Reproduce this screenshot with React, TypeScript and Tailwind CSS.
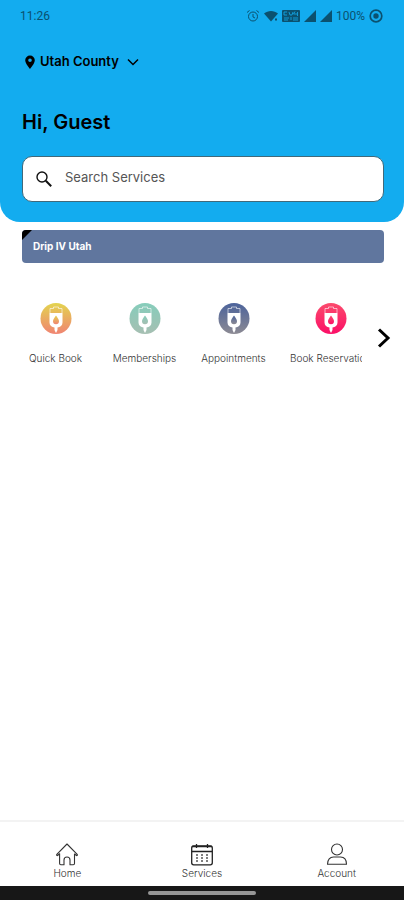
import { useState } from 'react'

type Service = {
  id: string
  label: string
  from: string
  to: string
}

const SERVICES: Service[] = [
  { id: 'quick', label: 'Quick Book', from: '#e3d44f', to: '#f08472' },
  { id: 'memberships', label: 'Memberships', from: '#86cdbb', to: '#a6bfb2' },
  { id: 'appointments', label: 'Appointments', from: '#4c639b', to: '#8c8a93' },
  { id: 'reservation', label: 'Book Reservation', from: '#fb4a6c', to: '#fb0f67' },
]

function DripIcon({ id, from, to }: Service) {
  return (
    <svg viewBox="0 0 32 32" className="h-8 w-8" aria-hidden="true">
      <defs>
        <linearGradient id={id} x1="0" y1="0" x2="0" y2="1">
          <stop offset="0" stopColor={from} />
          <stop offset="1" stopColor={to} />
        </linearGradient>
      </defs>
      <circle cx="16" cy="16.500" r="15.500" fill={`url(#${id})`} />
      <path d="M10 11V6.500h3.500V5h5v1.500H22V11" fill="none" stroke="#fff" strokeOpacity="0.6" strokeWidth="1" />
      <path d="M9.500 11h13v9.500a5 5 0 0 1-5 5v2.500L16 31l-1.500-3v-2.500a5 5 0 0 1-5-5z" fill="#fff" />
      <path d="M16 13.500c1.800 2.600 3 4.200 3 5.700a3 3 0 0 1-6 0c0-1.500 1.200-3.100 3-5.700z" fill={`url(#${id})`} />
    </svg>
  )
}

function StatusIcons() {
  return (
    <div className="flex items-center">
      {/* Alarm */}
      <svg viewBox="0 0 14 14" className="mr-1 h-3.5 w-3.5" fill="none" stroke="currentColor" aria-hidden="true">
        <circle cx="7" cy="7.500" r="4.500" />
        <path d="M7 5v3l2 1M1 3.500 3.500 1.500M13 3.500 10.500 1.500" />
      </svg>
      {/* Wifi */}
      <svg viewBox="0 0 14 14" className="mr-1 h-3.5 w-3.5" fill="currentColor" aria-hidden="true">
        <path d="M0 4.500C4 1 10 1 14 4.500L7 12.500z" />
        <path d="M11 9.500h2v2h-2z" />
      </svg>
      {/* VoLTE */}
      <svg viewBox="0 0 18 12" className="mr-1 h-3 w-[18px]" aria-hidden="true">
        <rect width="18" height="12" rx="1" fill="currentColor" />
        <path d="M2 2v3h3M5 2H2M7 2l1 3h2l1-3M13 1.500 11.500 4H15M15.500 2v4M2 8h5M9 7v3M11 8h5M2 10h4M11 10h5" fill="none" stroke="#13acef" strokeWidth="0.800" />
      </svg>
      <svg viewBox="0 0 12 12" className="mr-1 h-3 w-3" fill="currentColor" aria-hidden="true">
        <path d="M12 0v12H0z" />
      </svg>
      <svg viewBox="0 0 12 12" className="mr-1 h-3 w-3" fill="currentColor" aria-hidden="true">
        <path d="M12 0v12H0z" />
      </svg>
      <span className="mr-1 font-[Roboto]">100%</span>
      <svg viewBox="0 0 14 14" className="h-3.5 w-3.5" aria-hidden="true">
        <circle cx="7" cy="7" r="5.800" fill="none" stroke="currentColor" strokeWidth="1.700" />
        <circle cx="7" cy="7" r="2.700" fill="currentColor" />
      </svg>
    </div>
  )
}

function HomeIcon() {
  return (
    <svg viewBox="0 0 24 24" className="h-6 w-6" fill="none" stroke="#333" strokeWidth="1.100" strokeLinejoin="round" aria-hidden="true">
      <path d="M5 11.500 2.800 13.300a.7.7 0 0 1-1-1L12 2l10.200 10.300a.7.7 0 0 1-1 1L19.500 12v9.500a1.200 1.200 0 0 1-1.200 1.200H15V18a3 3 0 0 0-6 0v4.700H5.800a1.200 1.200 0 0 1-1.200-1.200V12" />
    </svg>
  )
}

function CalendarIcon() {
  return (
    <svg viewBox="0 0 24 24" className="h-6 w-6" fill="none" stroke="#222" strokeWidth="1.300" aria-hidden="true">
      <rect x="1.700" y="4" width="20.600" height="18.800" rx="2" />
      <path d="M2 9.500h20M6.500 2v4M17.500 2v4M2 4.500h20" />
      <path d="M6 13h2M11 13h2M16 13h2M6 16h2M11 16h2M16 16h2M6 19h2M11 19h2M16 19h2" stroke="#555" />
    </svg>
  )
}

function AccountIcon() {
  return (
    <svg viewBox="0 0 24 24" className="h-6 w-6" fill="none" stroke="#333" strokeWidth="1.100" strokeLinejoin="round" aria-hidden="true">
      <circle cx="12" cy="7.500" r="5.500" />
      <path d="M2.500 22.300c0-5 2.500-7.300 6-7.300h7c3.500 0 6 2.300 6 7.300z" />
    </svg>
  )
}

const TABS = [
  { label: 'Home', icon: HomeIcon },
  { label: 'Services', icon: CalendarIcon },
  { label: 'Account', icon: AccountIcon },
]

export default function App() {
  const [query, setQuery] = useState('')

  return (
    <div className="flex min-h-screen flex-col bg-white font-[Inter,sans-serif] text-black">
      <header className="rounded-b-[20px] bg-[#13acef] pb-5">
        <div className="flex h-8 items-center justify-between pr-[21px] pl-5 text-xs text-[#0b516f]">
          <span className="font-[Roboto]">11:26</span>
          <StatusIcons />
        </div>

        <div className="pr-5 pl-[22px]">
          <button type="button" className="mt-5 flex h-5 items-center text-[13px] font-semibold">
            <svg viewBox="0 0 16 16" className="mr-0.5 h-4 w-4" aria-hidden="true">
              <path fillRule="evenodd" d="M8 1.500a4.800 4.800 0 0 0-4.800 4.800C3.200 9.500 8 15 8 15s4.800-5.500 4.800-8.700A4.800 4.800 0 0 0 8 1.500zm0 3a1.800 1.800 0 1 1 0 3.600 1.800 1.800 0 0 1 0-3.600z" />
            </svg>
            Utah County
            <svg viewBox="0 0 12 12" className="ml-2 h-3 w-3" fill="none" stroke="currentColor" strokeWidth="1.500" aria-hidden="true">
              <path d="M1 3.500l5 5 5-5" />
            </svg>
          </button>

          <h1 className="mt-9 text-xl leading-7 font-semibold">Hi, Guest</h1>

          <label className="mt-5 flex h-[46px] items-center rounded-[10px] border border-[#41697a] bg-white pb-1 pl-3">
            <svg viewBox="0 0 18 18" className="mt-1 h-[18px] w-[18px] shrink-0" fill="none" stroke="#111" aria-hidden="true">
              <circle cx="7" cy="7" r="5" strokeWidth="1.400" />
              <path d="M10.800 10.800l5.400 5.400" strokeWidth="2" />
            </svg>
            <input
              type="text"
              aria-label="Search Services"
              placeholder="Search Services"
              value={query}
              onChange={(e) => setQuery(e.target.value)}
              className="ml-3 min-w-0 flex-1 text-[13px] leading-5 outline-none placeholder:text-[#555]"
            />
          </label>
        </div>
      </header>

      <main className="flex-1">
        <section className="relative mt-2 mr-5 ml-[22px] overflow-hidden rounded bg-[#60769e] px-[11px] py-2 text-[10px] leading-[17px] font-bold text-white">
          <svg viewBox="0 0 10 10" className="absolute top-0 left-0 h-2.5 w-2.5" aria-hidden="true">
            <path d="M0 0h10L0 10z" />
          </svg>
          <h2>Drip IV Utah</h2>
        </section>

        {/* Services carousel */}
        <section className="mt-[39px] flex items-start">
          <div className="flex flex-1 gap-6 overflow-hidden pl-[23px]">
            {SERVICES.map((service) => (
              <button
                key={service.id}
                type="button"
                className="flex min-w-[65px] shrink-0 flex-col items-center text-[10px] leading-3 font-light whitespace-nowrap text-[#333]"
              >
                <DripIcon {...service} />
                <span className="mt-[18px]">{service.label}</span>
              </button>
            ))}
          </div>
          <button type="button" aria-label="Next services" className="flex w-[42px] justify-end pt-[26px] pr-3">
            <svg viewBox="0 0 16 20" className="h-5 w-4" fill="none" stroke="#000" strokeWidth="3" aria-hidden="true">
              <path d="M3 1.500l9 8.500-9 8.500" />
            </svg>
          </button>
        </section>
      </main>

      <nav className="grid grid-cols-3 border-t-2 border-[#f3f3f3] pt-5 pb-1.5">
        {TABS.map(({ label, icon: Icon }) => (
          <a key={label} href="#" className="flex flex-col items-center text-[10px] leading-[14px] font-light text-[#333]">
            <Icon />
            {label}
          </a>
        ))}
      </nav>
      <footer className="flex h-3.5 items-center justify-center bg-[#171717]">
        <div className="h-1 w-[108px] rounded-full bg-[#969696]" />
      </footer>
    </div>
  )
}
